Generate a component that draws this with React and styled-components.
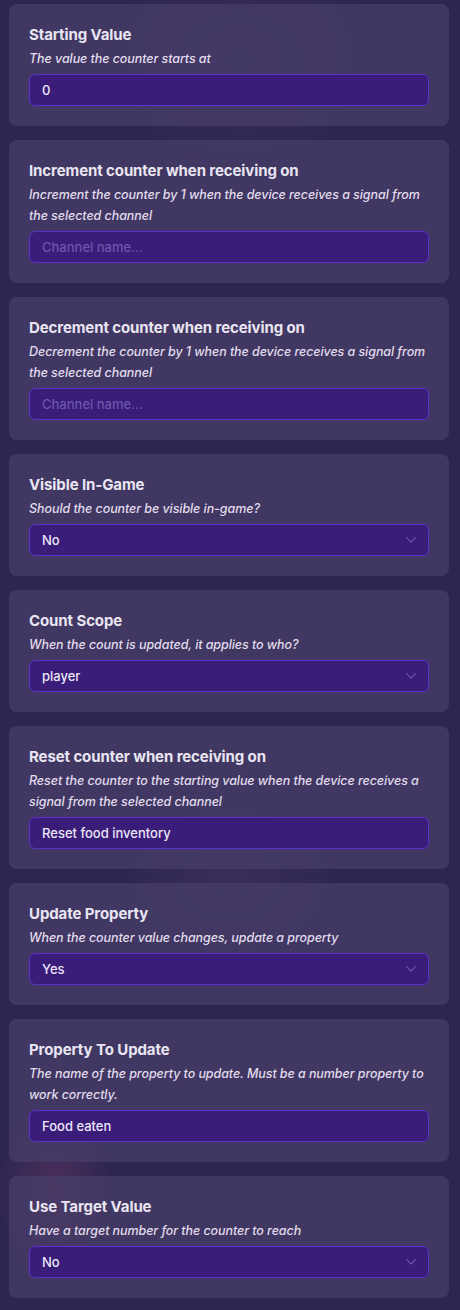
import React from "react"
import styled, { createGlobalStyle } from "styled-components"

const GlobalStyle = createGlobalStyle`
  html, body {
    margin: 0;
    padding: 0;
  }
  body {
    font-family: Inter, "Noto Sans", sans-serif;
    background-color: #2e2651;
    background-image:
      radial-gradient(ellipse 80px 130px at 55px 1190px, rgba(120, 60, 110, 0.4), transparent 70%),
      radial-gradient(ellipse 160px 120px at 230px 880px, rgba(80, 60, 110, 0.35), transparent 70%),
      radial-gradient(ellipse 200px 160px at 240px 60px, rgba(80, 60, 110, 0.3), transparent 70%);
    min-height: 1310px;
  }
`

const fields = [
  {
    title: "Starting Value",
    desc: "The value the counter starts at",
    kind: "text",
    value: "0",
  },
  {
    title: "Increment counter when receiving on",
    desc: "Increment the counter by 1 when the device receives a signal from the selected channel",
    kind: "text",
    placeholder: "Channel name...",
  },
  {
    title: "Decrement counter when receiving on",
    desc: "Decrement the counter by 1 when the device receives a signal from the selected channel",
    kind: "text",
    placeholder: "Channel name...",
  },
  {
    title: "Visible In-Game",
    desc: "Should the counter be visible in-game?",
    kind: "select",
    value: "No",
  },
  {
    title: "Count Scope",
    desc: "When the count is updated, it applies to who?",
    kind: "select",
    value: "player",
  },
  {
    title: "Reset counter when receiving on",
    desc: "Reset the counter to the starting value when the device receives a signal from the selected channel",
    kind: "text",
    value: "Reset food inventory",
  },
  {
    title: "Update Property",
    desc: "When the counter value changes, update a property",
    kind: "select",
    value: "Yes",
  },
  {
    title: "Property To Update",
    desc: "The name of the property to update. Must be a number property to work correctly.",
    kind: "text",
    value: "Food eaten",
  },
  {
    title: "Use Target Value",
    desc: "Have a target number for the counter to reach",
    kind: "select",
    value: "No",
  },
]

const Chevron = () => (
  <svg width="10" height="6" viewBox="0 0 10 6" fill="none">
    <path d="M0.6 0.6 L5 5.2 L9.4 0.6" stroke="#6e5aa6" strokeWidth="1.1" strokeLinecap="round" strokeLinejoin="round" />
  </svg>
)

const App = () => {
  return (
    <>
      <GlobalStyle />
      <Page>
        {fields.map((f, i) => (
          <Card key={i}>
            <Title>{f.title}</Title>
            <Desc>{f.desc}</Desc>
            <Field>
              {f.value ? <Value>{f.value}</Value> : <Placeholder>{f.placeholder}</Placeholder>}
              {f.kind === "select" && (
                <Arrow>
                  <Chevron />
                </Arrow>
              )}
            </Field>
          </Card>
        ))}
      </Page>
    </>
  )
}

const Page = styled.div`
  display: flex;
  flex-direction: column;
  gap: 14px;
  padding: 4px 11px 12px 9px;
`

const Card = styled.div`
  background: rgba(72, 63, 105, 0.72);
  border-radius: 8px;
  padding: 20px;
`

const Title = styled.div`
  font-size: 15px;
  line-height: 22px;
  font-weight: 700;
  color: #e9e5f1;
  letter-spacing: -0.1px;
`

const Desc = styled.div`
  margin-top: 2px;
  font-size: 12.5px;
  line-height: 21px;
  font-style: italic;
  font-weight: 500;
  letter-spacing: -0.07px;
  color: #e2dcec;
`

const Field = styled.div`
  margin-top: 5px;
  height: 32px;
  box-sizing: border-box;
  display: flex;
  align-items: center;
  justify-content: space-between;
  padding: 0 12px 1px 12px;
  background: #3a1c79;
  border: 1px solid #5b32cc;
  border-radius: 6px;
`

const Value = styled.span`
  font-size: 13px;
  font-weight: 500;
  color: #ebe6f7;
`

const Placeholder = styled.span`
  font-size: 13px;
  font-weight: 500;
  color: #6b56a8;
`

const Arrow = styled.span`
  display: flex;
  align-items: center;
`

export default App
